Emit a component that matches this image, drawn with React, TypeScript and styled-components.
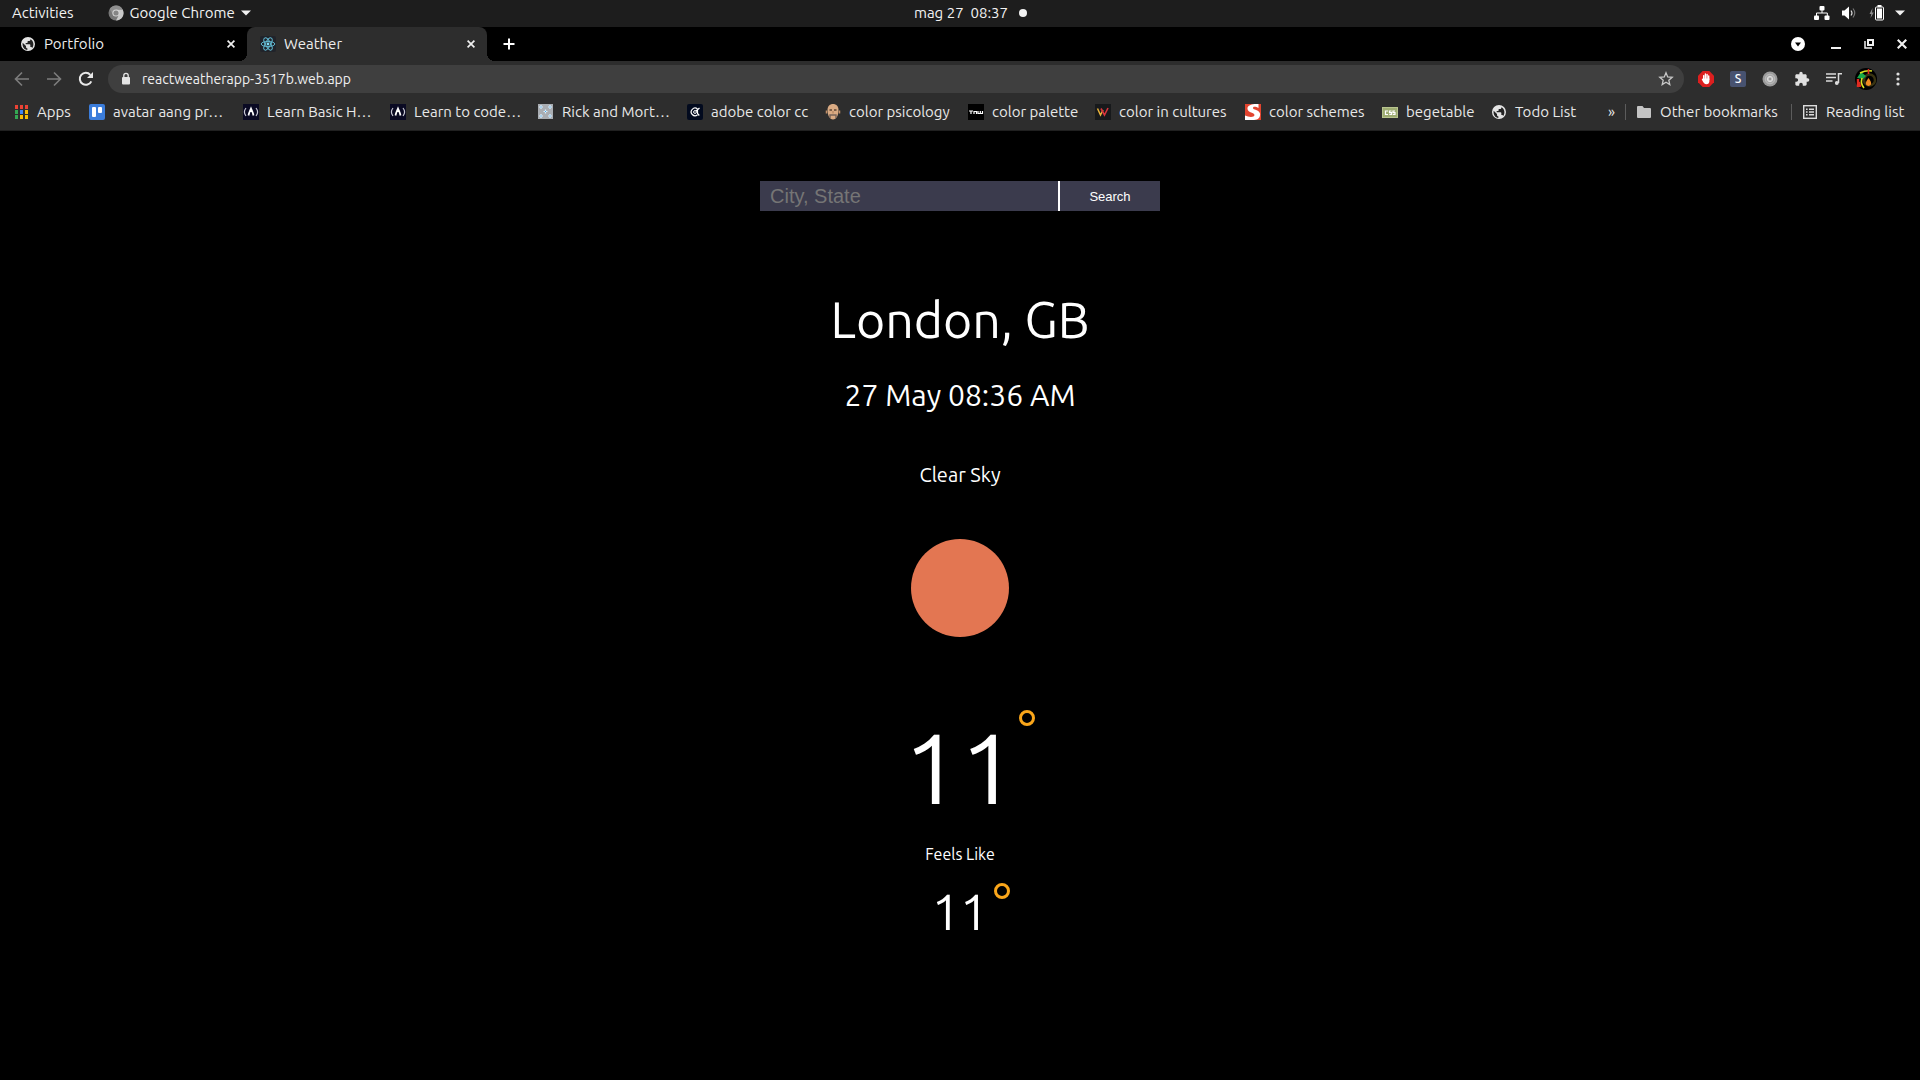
import React from "react";
import styled, { createGlobalStyle } from "styled-components";

const Global = createGlobalStyle`
  *, *::before, *::after { box-sizing: border-box; }
  body {
    margin: 0;
    background: #000;
    color: #fff;
    font-family: Ubuntu, "Noto Sans", sans-serif;
  }
  button { font: inherit; color: inherit; background: none; border: 0; padding: 0; cursor: pointer; }
  svg { display: block; flex: none; }
`;

/* ---------- desktop top bar ---------- */

const TopBar = styled.header`
  display: grid;
  grid-template-columns: 1fr auto 1fr;
  align-items: center;
  height: 27px;
  padding: 0 15px 2px 12px;
  background: #1d1d1d;
  color: #f2f2f2;
  font-size: 15px;
  line-height: 20px;
`;

const TopGroup = styled.div<{ $gap: number; $end?: boolean }>`
  display: flex;
  align-items: center;
  gap: ${(p) => p.$gap}px;
  justify-content: ${(p) => (p.$end ? "flex-end" : "flex-start")};
`;

const AppMenu = styled.button`
  display: flex;
  align-items: center;
  gap: 6px;
`;

const Clock = styled.button`
  display: flex;
  align-items: center;
  gap: 11px;
  white-space: pre;
  padding-left: 24px;
`;

const Dot = styled.span`
  width: 8px;
  height: 8px;
  border-radius: 50%;
  background: #f2f2f2;
`;

/* ---------- browser chrome ---------- */

const TabStrip = styled.div`
  display: flex;
  align-items: stretch;
  height: 34px;
  padding-left: 7px;
`;

const Tab = styled.div<{ $active?: boolean }>`
  position: relative;
  display: flex;
  align-items: center;
  width: 240px;
  padding: 0 10px 0 13px;
  gap: 8px;
  border-radius: 8px 8px 0 0;
  background: ${(p) => (p.$active ? "#2d2d2d" : "transparent")};
  color: #ececec;
  font-size: 15px;
  line-height: 20px;

  &::before, &::after {
    content: "";
    display: ${(p) => (p.$active ? "block" : "none")};
    position: absolute;
    bottom: 0;
    width: 8px;
    height: 8px;
  }
  &::before {
    right: 100%;
    background: radial-gradient(circle at 0 0, transparent 8px, #2d2d2d 8px);
  }
  &::after {
    left: 100%;
    background: radial-gradient(circle at 100% 0, transparent 8px, #2d2d2d 8px);
  }
`;

const TabTitle = styled.span`
  flex: 1;
`;

const IconButton = styled.button<{ $size?: number }>`
  display: flex;
  align-items: center;
  justify-content: center;
  width: ${(p) => p.$size ?? 32}px;
  height: ${(p) => Math.min(p.$size ?? 28, 28)}px;
`;

const NewTab = styled(IconButton)`
  align-self: center;
  margin-left: 6px;
`;

const WindowControls = styled.div`
  display: flex;
  align-items: center;
  margin-left: auto;
  padding-right: 2px;
  gap: 1px;
`;

const TabSearchButton = styled(IconButton)`
  margin-right: 5px;
`;

const Toolbar = styled.nav`
  display: flex;
  align-items: center;
  height: 36px;
  padding: 0 6px;
  background: #2d2d2d;
  color: #e4e4e4;
`;

const AddressBar = styled.form`
  flex: 1;
  display: flex;
  align-items: center;
  height: 28px;
  margin: 0 6px;
  padding: 0 2px 0 12px;
  gap: 10px;
  border-radius: 14px;
  background: #3f3f3f;
`;

const AddressInput = styled.input`
  flex: 1;
  min-width: 0;
  border: 0;
  padding: 0;
  outline: 0;
  background: none;
  color: #f0f0f0;
  font: 14px/20px Ubuntu, "Noto Sans", sans-serif;
`;

const BookmarkBar = styled.nav`
  display: flex;
  align-items: center;
  height: 34px;
  padding: 0 13px 4px;
  gap: 16px;
  background: #2d2d2d;
  border-bottom: 1px solid #202020;
  color: #e8e8e8;
  font-size: 15px;
  line-height: 20px;
`;

const Bookmark = styled.a`
  display: flex;
  align-items: center;
  gap: 8px;
  color: inherit;
  text-decoration: none;
  white-space: nowrap;
`;

const BookmarkLabel = styled.span<{ $width: number }>`
  min-width: ${(p) => p.$width}px;
`;

const BookmarkEnd = styled.div`
  display: flex;
  align-items: center;
  gap: 10px;
  margin-left: auto;
`;

const Divider = styled.span`
  width: 1px;
  height: 16px;
  background: #5c5c5c;
`;

/* ---------- weather page ---------- */

const Page = styled.main`
  display: flex;
  flex-direction: column;
  align-items: center;
  padding: 50px 20px;
`;

const SearchForm = styled.form`
  display: flex;
  width: 400px;
  max-width: 100%;
  height: 30px;
`;

const CityInput = styled.input`
  flex: 1;
  min-width: 0;
  padding: 0 10px;
  border: 0;
  border-radius: 0;
  border-right: 2px solid #fff;
  background: #3b3b4d;
  color: #fff;
  font: 20px "Liberation Sans", Arial, sans-serif;
  &::placeholder { color: #757575; }
`;

const SearchButton = styled.button`
  width: 100px;
  background: #3b3b4d;
  color: #fff;
  font: 13px "Liberation Sans", Arial, sans-serif;
`;

const City = styled.h1`
  margin: 78px 0 0;
  font-weight: 400;
  font-size: 50px;
  line-height: 60px;
`;

const DateLine = styled.p`
  margin: 26px 0 0;
  font-size: 30px;
  line-height: 40px;
`;

const Condition = styled.p`
  margin: 45px 0 49px;
  font-size: 20px;
  line-height: 30px;
`;

const Sun = styled.div`
  width: 98px;
  height: 98px;
  border-radius: 50%;
  background: #e37652;
`;

const Temperature = styled.p<{ $large?: boolean }>`
  position: relative;
  margin: ${(p) => (p.$large ? 70 : 15)}px 0 0;
  font-size: ${(p) => (p.$large ? 100 : 50)}px;
  line-height: ${(p) => (p.$large ? 120 : 60)}px;

  &::after {
    content: "";
    position: absolute;
    top: ${(p) => (p.$large ? 3 : 2)}px;
    left: calc(100% + ${(p) => (p.$large ? 3 : 6)}px);
    width: 16px;
    height: 16px;
    border: 3px solid #faa61a;
    border-radius: 50%;
  }
`;

const FeelsLike = styled.p`
  margin: 15px 0 0;
  font-size: 16px;
  line-height: 24px;
`;

/* ---------- icons ---------- */

const Globe = () => (
  <svg width="16" height="16" viewBox="0 0 24 24">
    <path fill="#e4e4e4" d="M12 1.500a10.500 10.500 0 1 0 0 21a10.500 10.500 0 0 0 0-21z" />
    <path fill="#222" d="M4 10l5 5v1.500c0 1 1 2 2 2V21C6.500 20.500 3 16 4 10zM18.500 18c-.3-.9-1-1.500-2-1.500h-1v-3c0-.6-.4-1-1-1h-6v-2h2c.6 0 1-.4 1-1v-2h2c1.100 0 2-.9 2-2v-.6c4 1.700 6.500 7.500 3 13.100z" />
  </svg>
);

const ReactLogo = () => (
  <svg width="16" height="16" viewBox="0 0 16 16">
    <rect width="16" height="16" rx="2" fill="#20232a" />
    <g fill="none" stroke="#61b8d0">
      <ellipse cx="8" cy="8" rx="6.800" ry="2.600" />
      <ellipse cx="8" cy="8" rx="6.800" ry="2.600" transform="rotate(60 8 8)" />
      <ellipse cx="8" cy="8" rx="6.800" ry="2.600" transform="rotate(120 8 8)" />
    </g>
    <circle cx="8" cy="8" r="1.400" fill="#7fdcf5" />
  </svg>
);

const Cross = ({ size = 8 }: { size?: number }) => (
  <svg width={size} height={size} viewBox="0 0 8 8" stroke="#f0f0f0" strokeWidth="1.700">
    <path d="M.6.6l6.800 6.800M7.400.6L.6 7.400" />
  </svg>
);

const Caret = () => (
  <svg width="10" height="6" viewBox="0 0 10 6"><path d="M0 .5h10L5 5.500z" fill="#f2f2f2" /></svg>
);

const ChromeGrey = () => (
  <svg width="16" height="16" viewBox="0 0 16 16">
    <circle cx="8" cy="8" r="7.500" fill="#777" />
    <path d="M8 4.500h6.700A7.500 7.500 0 0 1 8 15.500l3-5.700z" fill="#c9c9c9" />
    <path d="M1.700 4A7.500 7.500 0 0 1 14.700 4.500H8L5 9.700z" fill="#8f8f8f" />
    <circle cx="8" cy="8" r="3.600" fill="#d8d8d8" />
    <circle cx="8" cy="8" r="2.600" fill="#858585" />
  </svg>
);

const Arrow = ({ flip }: { flip?: boolean }) => (
  <svg width="16" height="16" viewBox="0 0 16 16" fill="none" stroke="#7d7d7d" strokeWidth="1.600">
    <path d={flip ? "M1 8h13M8 1.500L14.500 8L8 14.500" : "M15 8H2M8 1.500L1.500 8L8 14.500"} />
  </svg>
);

const Reload = () => (
  <svg width="16" height="16" viewBox="0 0 16 16">
    <path d="M13.300 10.300A6 6 0 1 1 12.300 3.800" fill="none" stroke="#e8e8e8" strokeWidth="2" />
    <path d="M15 1v6H9z" fill="#e8e8e8" />
  </svg>
);

const Lock = () => (
  <svg width="12" height="14" viewBox="0 0 12 14">
    <rect x="2" y="5" width="8" height="7.500" rx="1" fill="#e4e4e4" />
    <path d="M3.800 5.500V3.600a2.200 2.200 0 0 1 4.400 0v1.900" fill="none" stroke="#e4e4e4" strokeWidth="1.300" />
  </svg>
);

const Star = () => (
  <svg width="16" height="16" viewBox="0 0 16 16" fill="none" stroke="#c8c8c8" strokeWidth="1.300">
    <path d="M8 1.800l1.700 4.100 4.500.4-3.400 2.900 1 4.400L8 11.300l-3.800 2.300 1-4.400L1.800 6.300l4.500-.4z" />
  </svg>
);

const Adblock = () => (
  <svg width="16" height="16" viewBox="0 0 16 16">
    <path d="M4.700 0h6.600L16 4.700v6.600L11.300 16H4.700L0 11.300V4.700z" fill="#dc1f1f" />
    <g stroke="#fff" strokeWidth="1.400" strokeLinecap="round">
      <path d="M5.700 8V4.600M7.400 8V3M9.100 8V3.500M10.700 8.500V5" />
    </g>
    <path d="M5 7.500h6.400V10c0 2-1.200 3.300-3 3.300S5.500 12 4.200 9.300L3.700 8z" fill="#fff" />
  </svg>
);

const STile = () => (
  <svg width="16" height="16" viewBox="0 0 16 16">
    <rect width="16" height="16" rx="2" fill="#475270" />
    <text x="8" y="12" textAnchor="middle" fill="#fff" fontSize="12" fontWeight="500">S</text>
  </svg>
);

const GreyDisc = () => (
  <svg width="16" height="16" viewBox="0 0 16 16">
    <circle cx="8" cy="8" r="7.500" fill="#9a9a9a" />
    <circle cx="8" cy="8" r="4.800" fill="#a8a8a8" stroke="#bcbcbc" />
    <circle cx="8" cy="8" r="2.600" fill="#c2c2c2" stroke="#dedede" />
    <circle cx="8" cy="8" r="1" fill="#8a8a8a" />
  </svg>
);

const Puzzle = () => (
  <svg width="16" height="16" viewBox="0 0 24 24" fill="#e0e0e0">
    <path d="M20.500 11H19V7c0-1.100-.9-2-2-2h-4V3.500a2.500 2.500 0 0 0-5 0V5H4c-1.100 0-2 .9-2 2v3.800h1.500a2.700 2.700 0 0 1 0 5.400H2V20c0 1.100.9 2 2 2h3.800v-1.500a2.700 2.700 0 0 1 5.400 0V22H17c1.100 0 2-.9 2-2v-4h1.500a2.500 2.500 0 0 0 0-5z" />
  </svg>
);

const Playlist = () => (
  <svg width="16" height="16" viewBox="0 0 16 16" fill="none" stroke="#dcdcdc" strokeWidth="1.500">
    <path d="M0 3h10M0 6.500h10M0 10h6.500M16 2.700h-3.500V12" />
    <circle cx="10.800" cy="12" r="1.900" fill="#dcdcdc" stroke="none" />
  </svg>
);

const Avatar = () => (
  <svg width="22" height="22" viewBox="0 0 22 22">
    <circle cx="11" cy="11" r="11" fill="#000" />
    <circle cx="14.500" cy="12" r="5.500" fill="none" stroke="#3a3412" strokeWidth="2.500" />
    <path d="M3 19V11M5 19l-1-5" stroke="#e02a20" strokeWidth="2.400" />
    <path d="M2 10L6 4L11 8L8 11z" fill="#17a84a" />
    <path d="M5 5c4-2 7-3 12-2M7 10c-1 4-1 6 2 10" stroke="#d9e021" strokeWidth="1.600" fill="none" />
    <path d="M13.500 1v5" stroke="#e02a20" strokeWidth="1.600" />
    <path d="M13.500 10c3 4 4 7 0 8c-4-1-3-4 0-8z" fill="#f08a24" />
  </svg>
);

const Kebab = () => (
  <svg width="16" height="16" viewBox="0 0 16 16" fill="#e0e0e0">
    <circle cx="8" cy="3" r="1.600" /><circle cx="8" cy="8" r="1.600" /><circle cx="8" cy="13" r="1.600" />
  </svg>
);

const Apps = () => (
  <svg width="16" height="16" viewBox="0 0 16 16">
    {["#ea4335", "#ea4335", "#ea4335", "#34a853", "#4285f4", "#fbbc05", "#34a853", "#fbbc05", "#fbbc05"].map((c, i) => (
      <rect key={i} x={2 + (i % 3) * 5} y={1 + Math.floor(i / 3) * 5} width="3" height="4" fill={c} />
    ))}
  </svg>
);

const Trello = () => (
  <svg width="16" height="16" viewBox="0 0 16 16">
    <rect width="16" height="16" rx="2" fill="#3b7ddb" />
    <rect x="3" y="3" width="4" height="10" rx="1" fill="#fff" />
    <rect x="9" y="3" width="4" height="6" rx="1" fill="#fff" />
  </svg>
);

const CodeCamp = () => (
  <svg width="16" height="16" viewBox="0 0 16 16">
    <rect width="16" height="16" fill="#0a0a23" />
    <path d="M3 4c-2 2.500-2 5.500 0 8M13 4c2 2.500 2 5.500 0 8" fill="none" stroke="#c8c8d4" strokeWidth="1.200" />
    <path d="M5.500 11.500C6 8.500 7 7 8 4.500C9 7 10 8.500 10.500 11.500" fill="none" stroke="#fff" strokeWidth="1.700" />
    <path d="M6.500 8h3L8 5z" fill="#fff" />
  </svg>
);

const Snow = () => (
  <svg width="16" height="16" viewBox="0 0 16 16">
    <rect width="15" height="15" fill="#a9adb2" />
    <path d="M3 1v4M1 3h4M12 1v4M10 3h4M7.500 5.500v4M5.500 7.500h4M3 10v4M1 12h4M12 10v4M10 12h4" stroke="#d9f0ff" strokeWidth="1.200" />
    <path d="M3 2.500v1M12 2.500v1M7.500 7v1M3 11.500v1M12 11.500v1" stroke="#3fa0e8" />
  </svg>
);

const AdobeColor = () => (
  <svg width="16" height="16" viewBox="0 0 16 16">
    <rect width="16" height="16" rx="2" fill="#020a1e" />
    <path d="M10.500 5A3.800 3.800 0 1 0 10.500 10.800" fill="none" stroke="#fff" strokeWidth="1.200" />
    <circle cx="8" cy="8" r="1.400" fill="none" stroke="#fff" />
    <path d="M9 7l3.500-3M10.500 6v3.500l1.800 2" fill="none" stroke="#fff" strokeWidth="1.200" />
  </svg>
);

const Face = () => (
  <svg width="16" height="16" viewBox="0 0 16 16">
    <path d="M2.500 6C2.500 2 5 0 8 0s5.500 2 5.500 6c0 5-2 9.500-5.500 9.500S2.500 11 2.500 6z" fill="#d9aa83" />
    <path d="M1.500 6.500v3M14.500 6.500v3" stroke="#c18f69" strokeWidth="1.500" />
    <path d="M4.500 6h2.500M9 6h2.500" stroke="#5b4433" strokeWidth="1.300" />
    <path d="M5 14v-3h6v3" fill="none" stroke="#75635a" strokeWidth="1.400" />
    <path d="M8 7v2.500" stroke="#ad7d58" />
  </svg>
);

const Tnw = () => (
  <svg width="16" height="16" viewBox="0 0 16 16">
    <rect width="16" height="16" fill="#000" />
    <path d="M1 7h4M3 7v3M6 10V7.500h2.500V10M10 7v2.500h4.500V7M12.300 7v2.500" fill="none" stroke="#fff" strokeWidth="1.200" />
  </svg>
);

const WTile = () => (
  <svg width="16" height="16" viewBox="0 0 16 16">
    <rect width="16" height="16" fill="#17191b" />
    <path d="M2.500 4.500L5.500 11L8 6" fill="none" stroke="#e8b23a" strokeWidth="1.500" />
    <path d="M6 4.500L9.500 11L13 4" fill="none" stroke="#d8343d" strokeWidth="1.600" />
  </svg>
);

const SRed = () => (
  <svg width="16" height="16" viewBox="0 0 16 16">
    <rect width="16" height="16" fill="#e2442f" />
    <path d="M13.500 0C8-.5 2 1 2.500 5s7 3.500 7 6S4 13.500 0 11.500V16h9c5 0 6.500-3.500 6-6.500C14 5.500 8 6 8 4S11 2.500 13.500 4z" fill="#fff" />
  </svg>
);

const CssTile = () => (
  <svg width="16" height="16" viewBox="0 0 16 16">
    <rect y="3" width="16" height="11" fill="#b8c48e" />
    <rect x="1" y="4" width="14" height="9" fill="#9eac72" />
    <path d="M6 7H3.500v3.500H6M9.500 7H7.500v1.700h2v1.800h-2.200M13 7h-2v1.700h2v1.800h-2.200" fill="none" stroke="#fff" strokeWidth="1.200" />
  </svg>
);

const Folder = () => (
  <svg width="16" height="16" viewBox="0 0 16 16">
    <path d="M2 2h4.500L8 4h6a1 1 0 0 1 1 1v8a1 1 0 0 1-1 1H2a1 1 0 0 1-1-1V3a1 1 0 0 1 1-1z" fill="#c4c4c4" />
  </svg>
);

const ReadingList = () => (
  <svg width="16" height="16" viewBox="0 0 16 16" fill="none" stroke="#dcdcdc">
    <rect x="1.700" y="1.700" width="12.600" height="12.600" strokeWidth="1.400" />
    <path d="M4 5.200h1.600M7 5.200h5M4 8h1.600M7 8h5M4 10.800h1.600M7 10.800h5" strokeWidth="1.500" />
  </svg>
);

const Network = () => (
  <svg width="16" height="16" viewBox="0 0 16 16" fill="#fff">
    <rect x="5.500" y="1" width="5" height="4.500" rx="1" /><rect x="0" y="10.500" width="5" height="4.500" rx="1" /><rect x="10.500" y="10.500" width="5" height="4.500" rx="1" />
    <path d="M8 5v3M2.500 11V8h10.800v3" fill="none" stroke="#fff" />
  </svg>
);

const Volume = () => (
  <svg width="16" height="16" viewBox="0 0 16 16">
    <path d="M1 5.500h2.500L8 1.500v13L3.500 10.500H1z" fill="#fff" />
    <path d="M10 5.500q2 2.500 0 5" fill="none" stroke="#ddd" strokeWidth="1.200" />
    <path d="M12 3.500q3.500 4.500 0 9" fill="none" stroke="#777" strokeWidth="1.200" />
  </svg>
);

const Battery = () => (
  <svg width="16" height="16" viewBox="0 0 16 16">
    <path d="M4.500 3L1.500 9H3.300L2.500 13L5.800 7.500H4z" fill="#8c8c8c" />
    <rect x="7.500" y="2" width="8" height="13" rx="1" fill="none" stroke="#fff" />
    <rect x="9" y="3.500" width="5" height="10" fill="#fff" /><rect x="9.500" y="0" width="4" height="2" fill="#fff" />
  </svg>
);

const TabSearch = () => (
  <svg width="14" height="14" viewBox="0 0 14 14"><circle cx="7" cy="7" r="7" fill="#fff" /><path d="M4 5.500h6L7 9.500z" fill="#000" /></svg>
);

const Minimize = () => (
  <svg width="10" height="10" viewBox="0 0 10 10"><rect y="8" width="10" height="2" fill="#f0f0f0" /></svg>
);

const Restore = () => (
  <svg width="10" height="10" viewBox="0 0 10 10" fill="none" stroke="#f0f0f0" strokeWidth="2">
    <rect x="4" y="1" width="5" height="5" /><path d="M1 2v7h7" strokeWidth="1.500" />
  </svg>
);

const Plus = () => (
  <svg width="12" height="12" viewBox="0 0 12 12"><path d="M6 .5v11M.5 6h11" stroke="#fff" strokeWidth="2" /></svg>
);

const bookmarks = [
  { label: "Apps", width: 36, Icon: Apps },
  { label: "avatar aang pr…", width: 114, Icon: Trello },
  { label: "Learn Basic H…", width: 107, Icon: CodeCamp },
  { label: "Learn to code…", width: 108, Icon: CodeCamp },
  { label: "Rick and Mort…", width: 109, Icon: Snow },
  { label: "adobe color cc", width: 98, Icon: AdobeColor },
  { label: "color psicology", width: 103, Icon: Face },
  { label: "color palette", width: 87, Icon: Tnw },
  { label: "color in cultures", width: 110, Icon: WTile },
  { label: "color schemes", width: 97, Icon: SRed },
  { label: "begetable", width: 69, Icon: CssTile },
  { label: "Todo List", width: 64, Icon: Globe },
];

const extensions = [
  { name: "Ad blocker", Icon: Adblock },
  { name: "S extension", Icon: STile },
  { name: "Disc extension", Icon: GreyDisc },
  { name: "Extensions", Icon: Puzzle },
  { name: "Media controls", Icon: Playlist },
  { name: "Profile", Icon: Avatar },
  { name: "Menu", Icon: Kebab },
];

export default function App() {
  return (
    <>
      <Global />
      <TopBar>
        <TopGroup $gap={34}>
          <button>Activities</button>
          <AppMenu><ChromeGrey />Google Chrome<Caret /></AppMenu>
        </TopGroup>
        <Clock>{"mag 27  08:37"}<Dot /></Clock>
        <TopGroup $gap={11} $end>
          <Network /><Volume /><Battery /><Caret />
        </TopGroup>
      </TopBar>

      <TabStrip>
        <Tab>
          <Globe />
          <TabTitle>Portfolio</TabTitle>
          <IconButton $size={12} aria-label="Close Portfolio"><Cross /></IconButton>
        </Tab>
        <Tab $active>
          <ReactLogo />
          <TabTitle>Weather</TabTitle>
          <IconButton $size={12} aria-label="Close Weather"><Cross /></IconButton>
        </Tab>
        <NewTab aria-label="New tab"><Plus /></NewTab>
        <WindowControls>
          <TabSearchButton aria-label="Search tabs"><TabSearch /></TabSearchButton>
          <IconButton aria-label="Minimize"><Minimize /></IconButton>
          <IconButton aria-label="Restore"><Restore /></IconButton>
          <IconButton aria-label="Close window"><Cross size={10} /></IconButton>
        </WindowControls>
      </TabStrip>

      <Toolbar>
        <IconButton aria-label="Back"><Arrow /></IconButton>
        <IconButton aria-label="Forward"><Arrow flip /></IconButton>
        <IconButton aria-label="Reload"><Reload /></IconButton>
        <AddressBar onSubmit={(e) => e.preventDefault()}>
          <Lock />
          <AddressInput aria-label="Address" defaultValue="reactweatherapp-3517b.web.app" />
          <IconButton type="button" aria-label="Bookmark this tab"><Star /></IconButton>
        </AddressBar>
        {extensions.map(({ name, Icon }) => (
          <IconButton key={name} aria-label={name}><Icon /></IconButton>
        ))}
      </Toolbar>

      <BookmarkBar>
        {bookmarks.map(({ label, width, Icon }) => (
          <Bookmark key={label} href="#"><Icon /><BookmarkLabel $width={width}>{label}</BookmarkLabel></Bookmark>
        ))}
        <BookmarkEnd>
          <button aria-label="More bookmarks">»</button>
          <Divider />
          <Bookmark href="#"><Folder /><BookmarkLabel $width={121}>Other bookmarks</BookmarkLabel></Bookmark>
          <Divider />
          <Bookmark href="#"><ReadingList /><BookmarkLabel $width={81}>Reading list</BookmarkLabel></Bookmark>
        </BookmarkEnd>
      </BookmarkBar>

      <Page>
        <SearchForm onSubmit={(e) => e.preventDefault()}>
          <CityInput aria-label="City, State" placeholder="City, State" />
          <SearchButton type="submit">Search</SearchButton>
        </SearchForm>
        <City>London, GB</City>
        <DateLine>27 May 08:36 AM</DateLine>
        <Condition>Clear Sky</Condition>
        <Sun role="img" aria-label="Clear sky" />
        <Temperature $large>11</Temperature>
        <FeelsLike>Feels Like</FeelsLike>
        <Temperature>11</Temperature>
      </Page>
    </>
  );
}
